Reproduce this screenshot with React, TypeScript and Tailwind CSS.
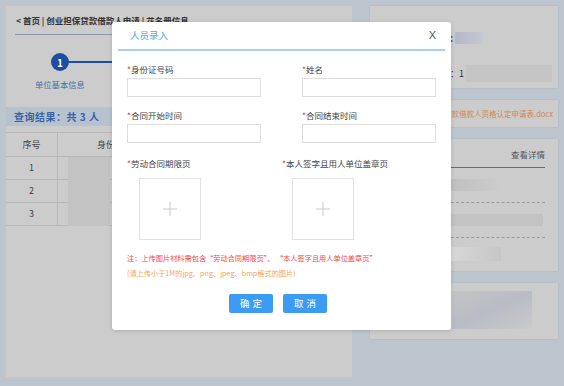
import React from "react";

const font = { fontFamily: '"Noto Sans CJK SC", "Noto Sans", sans-serif' };

function Label({ text }: { text: string }) {
  return (
    <div className="h-[12px] flex items-center text-[8.5px] leading-none text-[#444]">
      <span className="text-[#f03c3c]">*</span>
      {text}
    </div>
  );
}

function Field({ label }: { label: string }) {
  return (
    <div className="flex flex-col">
      <Label text={label} />
      <div className="mt-[3px] w-[134px] h-[19px] border border-[#dedede] bg-white" />
    </div>
  );
}

function Upload() {
  return (
    <div className="w-[62px] h-[62px] border border-[#e2e2e2] flex items-center justify-center">
      <svg width="14" height="14" viewBox="0 0 14 14">
        <path d="M7 0v14M0 7h14" stroke="#c9c9c9" strokeWidth="1" />
      </svg>
    </div>
  );
}

export default function App() {
  return (
    <div style={font} className="relative w-[564px] h-[386px] overflow-hidden bg-[#bdc6cf]">
      <div className="flex gap-[18px] pl-[6px] pt-[6px]">
        {/* Left panel */}
        <div className="w-[346px] h-[371px] bg-[#cccccc] flex flex-col">
          <div className="pl-[10px] pt-[8px] text-[8.5px] leading-[12px] text-[#333] font-bold">
            &lt; 首页 | 创业担保贷款借款人申请 | 花名册信息
          </div>
          <div className="ml-[9px] mt-[8px] w-[330px] h-px bg-[#8d9ab0]" />
          <div className="relative h-[58px] mt-[18px]">
            <div className="absolute left-[63px] top-[8px] w-[280px] h-[2px] bg-[#1d4d9c]" />
            <div className="absolute left-[45px] top-0 w-[18px] h-[18px] rounded-full bg-[#1b4e9e] text-white text-[10px] font-bold flex items-center justify-center">
              1
            </div>
            <div className="absolute left-[29px] top-[25px] text-[8.3px] text-[#4a6ea6]">单位基本信息</div>
          </div>
          <div className="mt-[-4px] h-[19px] bg-[#b7c2cf] flex items-center pl-[8px] text-[10px] font-bold text-[#3a62a6] tracking-[0.5px]">
            查询结果：共 3 人
          </div>
          <div className="mt-[6px] border-t border-[#b8b8b8] text-[9px] text-[#444]">
            <div className="flex h-[24px] border-b border-[#b8b8b8]">
              <div className="w-[52px] border-r border-[#b8b8b8] flex items-center justify-center">序号</div>
              <div className="flex-1 flex items-center pl-[39px]">身份证</div>
            </div>
            {["1", "2", "3"].map((n) => (
              <div key={n} className="flex h-[23px] border-b border-[#b8b8b8]">
                <div className="w-[52px] border-r border-[#b8b8b8] flex items-center justify-center">{n}</div>
                <div className="flex-1 flex items-center pl-[10px]">
                  <div className="w-[42px] h-[23px] bg-[#c3c3c3]" />
                </div>
              </div>
            ))}
          </div>
        </div>

        {/* Right column */}
        <div className="w-[188px] flex flex-col gap-[12px]">
          <div className="h-[82px] bg-[#cccccc] shadow-[0_0_2px_rgba(0,0,0,0.1)] flex flex-col pl-[80px] pt-[24px]">
            <div className="flex items-center gap-[2px]">
              <span className="text-[10px] text-[#3a5fa0] font-bold">:</span>
              <div className="w-[28px] h-[12px] bg-gradient-to-r from-[#b3b7c9] to-[#c6c8d0]" />
            </div>
            <div className="flex items-center mt-[20px] gap-[2px]">
              <span className="text-[9px] text-[#333]">：1</span>
              <div className="w-[86px] h-[17px] bg-[#c5c5c5]" />
            </div>
          </div>
          <div className="h-[27px] bg-[#cccccc] shadow-[0_0_2px_rgba(0,0,0,0.1)] flex items-center justify-end pr-[5px] text-[7.5px] text-[#cf8a55] whitespace-nowrap overflow-hidden">
            创业担保贷款借款人资格认定申请表.docx
          </div>
          <div className="h-[132px] bg-[#cccccc] shadow-[0_0_2px_rgba(0,0,0,0.1)] flex flex-col pl-[81px] pr-[13px] pt-[9px]">
            <div className="text-right text-[8.5px] leading-[12px] text-[#555]">查看详情</div>
            <div className="mt-[7px] h-px bg-[#5a6e98]" />
            <div className="mt-[11px] h-[12px] w-[50px] bg-gradient-to-r from-[#c0c0c0] to-[#cccccc]" />
            <div className="mt-[11px] border-t border-dashed border-[#9a9a9a]" />
            <div className="mt-[11px] h-[12px] w-[92px] bg-[#c3c3c3]" />
            <div className="mt-[11px] border-t border-dashed border-[#9a9a9a]" />
            <div className="mt-[9px] h-[14px] w-[50px] bg-gradient-to-r from-[#d8d8d8] to-[#c6c6c6]" />
          </div>
          <div className="h-[56px] bg-[#cccccc] shadow-[0_0_2px_rgba(0,0,0,0.1)] pl-[82px] pt-[8px]">
            <div className="w-[80px] h-[38px] bg-gradient-to-br from-[#c4c4c4] via-[#b9bcc6] to-[#cacaca]" />
          </div>
        </div>
      </div>

      {/* Modal */}
      <div className="absolute left-[112px] top-[22px] w-[339px] h-[308px] bg-white rounded-[3px] shadow-[0_1px_4px_rgba(0,0,0,0.15)] flex flex-col">
        <div className="h-[27px] flex items-center justify-between pl-[18px] pr-[15px]">
          <span className="text-[9.5px] text-[#59a6ee]">人员录入</span>
          <span className="text-[11px] text-[#555]" style={{ fontFamily: '"Liberation Sans", sans-serif' }}>X</span>
        </div>
        <div className="mx-[6px] h-[2px] bg-[#aacff2]" />
        <div className="pl-[15px] pt-[12px] grid grid-cols-[175px_175px] gap-y-[12px]">
          <Field label="身份证号码" />
          <Field label="姓名" />
          <Field label="合同开始时间" />
          <Field label="合同结束时间" />
        </div>
        <div className="flex pl-[15px] mt-[14px]">
          <div className="w-[155px] flex flex-col">
            <Label text="劳动合同期限页" />
            <div className="ml-[12px] mt-[9px]">
              <Upload />
            </div>
          </div>
          <div className="flex flex-col">
            <Label text="本人签字且用人单位盖章页" />
            <div className="ml-[10px] mt-[9px]">
              <Upload />
            </div>
          </div>
        </div>
        <div className="pl-[15px] mt-[13px] text-[7.2px] leading-[10px] text-[#f24a4a] whitespace-nowrap">
          注：上传图片材料需包含“劳动合同期限页”、 “本人签字且用人单位盖章页”
        </div>
        <div className="pl-[15px] mt-[5px] text-[7.2px] leading-[10px] text-[#f6a35e] whitespace-nowrap">
          (请上传小于1M的jpg、png、jpeg、bmp格式的图片)
        </div>
        <div className="flex pl-[117px] gap-[10px] mt-[16px]">
          <button className="w-[44px] h-[19px] bg-[#3c9bf2] rounded-[2px] text-white text-[9.5px] tracking-[3px] pl-[3px] flex items-center justify-center">
            确定
          </button>
          <button className="w-[44px] h-[19px] bg-[#3c9bf2] rounded-[2px] text-white text-[9.5px] tracking-[3px] pl-[3px] flex items-center justify-center">
            取消
          </button>
        </div>
      </div>
    </div>
  );
}
